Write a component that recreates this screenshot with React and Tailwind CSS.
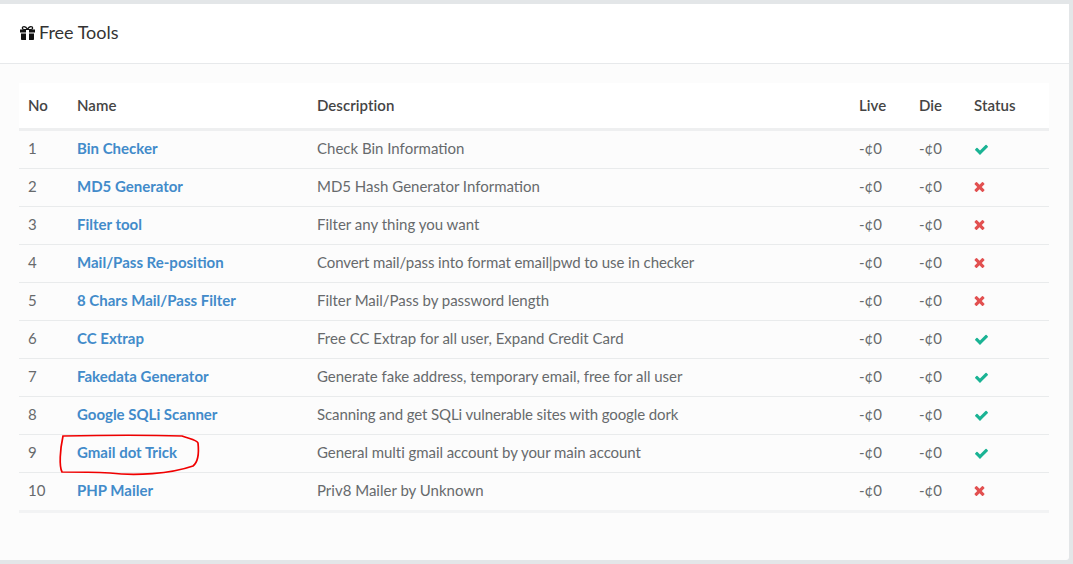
const rows = [
  ["1", "Bin Checker", "Check Bin Information", true, ""],
  ["2", "MD5 Generator", "MD5 Hash Generator Information", false, ""],
  ["3", "Filter tool", "Filter any thing you want", false, ""],
  ["4", "Mail/Pass Re-position", "Convert mail/pass into format email|pwd to use in checker", false, "tracking-[-0.09px]"],
  ["5", "8 Chars Mail/Pass Filter", "Filter Mail/Pass by password length", false, "tracking-[-0.03px]"],
  ["6", "CC Extrap", "Free CC Extrap for all user, Expand Credit Card", true, ""],
  ["7", "Fakedata Generator", "Generate fake address, temporary email, free for all user", true, "tracking-[-0.035px]"],
  ["8", "Google SQLi Scanner", "Scanning and get SQLi vulnerable sites with google dork", true, "tracking-[-0.11px]"],
  ["9", "Gmail dot Trick", "General multi gmail account by your main account", true, "tracking-[-0.06px]"],
  ["10", "PHP Mailer", "Priv8 Mailer by Unknown", false, ""],
];

function Gift() {
  return (
    <svg width="15" height="14" viewBox="0 0 15 14" className="block">
      <path d="M0 3.500h6v3H0zM9 3.500h6v3H9zM1 7.500h5V14H1.800Q1 14 1 13.200zM9 7.500h5v5.700q0 .8-.8.8H9z" fill="#111" />
      <path d="M7.500 3.500C6.500 1.300 5.300.6 4.100.6 3 .6 2.300 1.300 2.300 2.100 2.300 3 3 3.500 4 3.500zM7.500 3.500C8.500 1.300 9.700.6 10.900.6 12 .6 12.700 1.300 12.700 2.100 12.700 3 12 3.500 11 3.500z" fill="none" stroke="#111" strokeWidth="1.200" />
    </svg>
  );
}

function Check() {
  return (
    <svg width="15" height="15" viewBox="0 0 1792 1792" className="mt-[2px] block">
      <path d="M1671 566q0 40-28 68l-724 724-136 136q-28 28-68 28t-68-28l-136-136-362-362q-28-28-28-68t28-68l136-136q28-28 68-28t68 28l294 294 656-657q28-28 68-28t68 28l136 136q28 28 28 68z" fill="#1ab394" />
    </svg>
  );
}

function Cross() {
  return (
    <svg width="15" height="15" viewBox="0 0 1792 1792" className="-ml-[2px] block">
      <path d="M1490 1322q0 40-28 68l-136 136q-28 28-68 28t-68-28l-294-294-294 294q-28 28-68 28t-68-28l-136-136q-28-28-28-68t28-68l294-294-294-294q-28-28-28-68t28-68l136-136q28-28 68-28t68 28l294 294 294-294q28-28 68-28t68 28l136 136q28 28 28 68t-28 68l-294 294 294 294q28 28 28 68z" fill="#e25050" />
    </svg>
  );
}

export default function App() {
  return (
    <div className="relative h-[564px] w-[1073px] overflow-hidden bg-[#e3e6e8] pt-[4px] pr-[4px] pb-[4px] font-['Lato',sans-serif]">
      <div className="flex h-[556px] flex-col rounded-r-[3px] bg-[#fcfcfc]">
        <div className="flex h-[60px] items-center gap-[4px] border-b border-[#e7e9eb] bg-white pb-[2px] pl-[20px] text-[18px] text-[#333]">
          <Gift />
          <span>Free Tools</span>
        </div>
        <div className="pt-[19px] pl-[19px]">
          <div className="w-[1030px] border-b-[3px] border-[#f2f3f4] text-[15px] text-[#676a6c]">
            <div className="flex h-[48px] items-center border-b-[3px] border-[#eeeff0] bg-white font-semibold tracking-[0.05px] text-[#444]">
              <div className="w-[58px] pl-[9px]">No</div>
              <div className="w-[240px]">Name</div>
              <div className="w-[542px]">Description</div>
              <div className="w-[60px]">Live</div>
              <div className="w-[55px]">Die</div>
              <div>Status</div>
            </div>
            {rows.map(([no, name, desc, ok, track]) => (
              <div key={no} className="flex h-[38px] items-center border-b border-[#e9ebec] pb-[2px] last:h-[37px] last:border-b-0">
                <div className="w-[58px] pl-[9px]">{no}</div>
                <div className="w-[240px] font-bold text-[#428bca]">{name}</div>
                <div className={"w-[542px] " + track}>{desc}</div>
                <div className="w-[60px]">-¢0</div>
                <div className="w-[55px]">-¢0</div>
                <div>{ok ? <Check /> : <Cross />}</div>
              </div>
            ))}
          </div>
        </div>
      </div>
      <svg className="pointer-events-none absolute top-0 left-0" width="1073" height="564">
        <path d="M63 436 C110 435 150 435 182 436 C190 439 197 440 198 443 C199 452 198 462 193 466 C170 474 135 476 110 473 C90 472 75 472 62 472 C59 466 60 450 63 436Z" fill="none" stroke="#f00000" strokeWidth="1.700" />
      </svg>
    </div>
  );
}
